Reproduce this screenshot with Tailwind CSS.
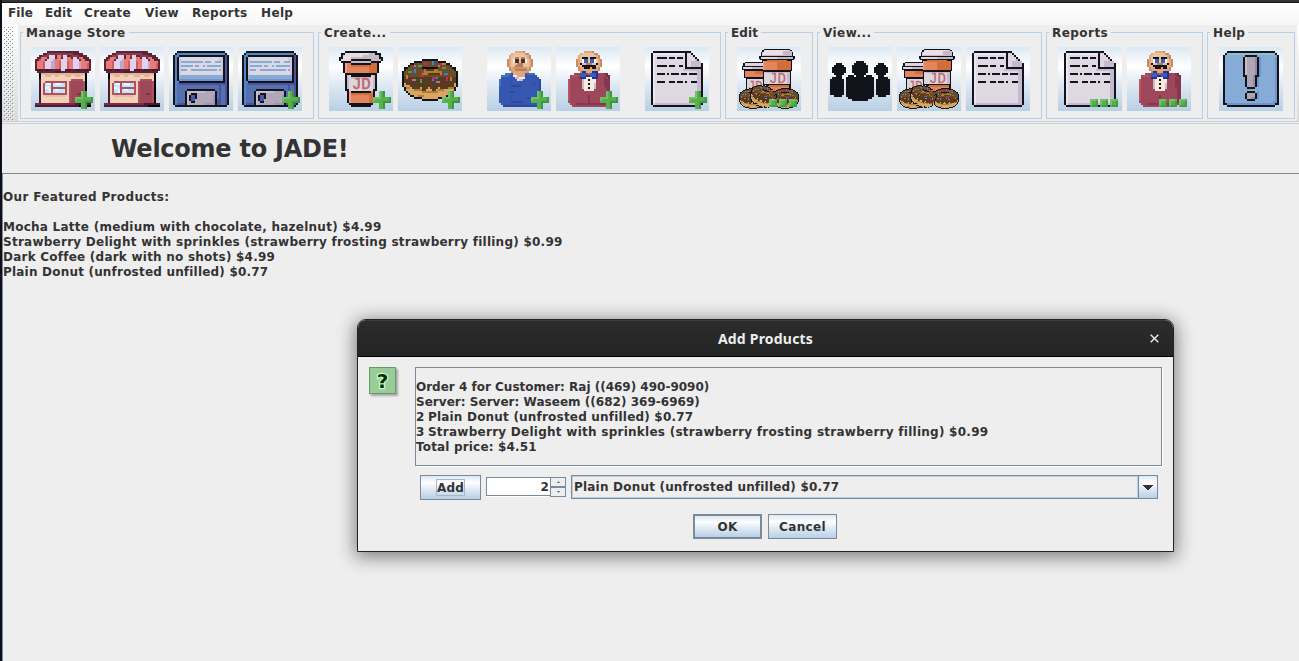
<!DOCTYPE html>
<html lang="en">
<head>
<meta charset="utf-8">
<title>JADE</title>
<script src="https://cdn.jsdelivr.net/npm/@tailwindcss/browser@4"></script>
</head>
<body class="w-[1299px] h-[661px] overflow-hidden bg-[#eeeeee] font-['DejaVu_Sans',sans-serif] font-bold text-[12px] leading-[15px] tracking-[0.2px] text-[#333333]">
<div class="relative flex w-full h-full border-l-2 border-[#0b0f1c]">
 <div class="flex flex-col w-full h-full">
  <div class="h-[3px] shrink-0 bg-[#333333] border-b border-[#161616]"></div>
  <nav class="flex h-[22px] shrink-0 bg-linear-to-b from-white to-[#f7f7f7] pt-[3px] pl-[6px] whitespace-nowrap tracking-[0.35px]">
   <span class="w-[37px] tracking-[0.1px]">File</span><span class="w-[39px] tracking-[0.1px]">Edit</span><span class="w-[61px]">Create</span><span class="w-[47px]">View</span><span class="w-[69px]">Reports</span><span>Help</span>
  </nav>

  <div class="flex h-[96px] shrink-0 bg-linear-to-b from-white to-[#dadada]">
   <svg class="w-[16px] h-[96px] shrink-0" shape-rendering="crispEdges"><defs><pattern id="bumps" width="4" height="4" patternUnits="userSpaceOnUse"><path d="M0 0h1v1H0zM2 2h1v1H2z" fill="#7a8a99"/><path d="M1 1h1v1H1zM3 3h1v1H3z" fill="#fff"/></pattern></defs><rect x="2" y="1" width="10" height="95" fill="url(#bumps)"/></svg>
   <div class="flex flex-1 bg-[#eeeeee] mr-[2px] pt-[7px] pl-[2px] gap-[4px]">
    <section class="relative w-[294px] h-[87px] shrink-0 border border-[#b8cfe5] pt-[14px] pl-[10px] flex gap-[5px]">
     <h2 class="absolute left-[2px] -top-[7px] h-[14px] px-[3px] bg-[#eeeeee] whitespace-nowrap tracking-[0.45px]">Manage Store</h2>
     <svg data-art="store plus"></svg><svg data-art="store"></svg><svg data-art="floppy"></svg><svg data-art="floppy plus"></svg>
    </section>
    <section class="relative w-[403px] h-[87px] shrink-0 border border-[#b8cfe5] pt-[14px] pl-[10px] flex gap-[5px]">
     <h2 class="absolute left-[2px] -top-[7px] h-[14px] px-[3px] bg-[#eeeeee] whitespace-nowrap tracking-[0.45px]">Create...</h2>
     <svg data-art="coffee plus"></svg><svg data-art="donut plus"></svg><span class="w-[15px]"></span><svg data-art="person plus"></svg><svg data-art="waiter plus"></svg><span class="w-[15px]"></span><svg data-art="doc plus"></svg>
    </section>
    <section class="relative w-[88px] h-[87px] shrink-0 border border-[#b8cfe5] pt-[14px] pl-[11px] flex">
     <h2 class="absolute left-[2px] -top-[7px] h-[14px] px-[3px] bg-[#eeeeee] whitespace-nowrap tracking-[0.1px]">Edit</h2>
     <svg data-art="products dots"></svg>
    </section>
    <section class="relative w-[225px] h-[87px] shrink-0 border border-[#b8cfe5] pt-[14px] pl-[10px] flex gap-[5px]">
     <h2 class="absolute left-[2px] -top-[7px] h-[14px] px-[3px] bg-[#eeeeee] whitespace-nowrap tracking-[0.45px]">View...</h2>
     <svg data-art="people"></svg><svg data-art="products"></svg><svg data-art="doc"></svg>
    </section>
    <section class="relative w-[157px] h-[87px] shrink-0 border border-[#b8cfe5] pt-[14px] pl-[11px] flex gap-[5px]">
     <h2 class="absolute left-[2px] -top-[7px] h-[14px] px-[3px] bg-[#eeeeee] whitespace-nowrap tracking-[0.45px]">Reports</h2>
     <svg data-art="doc dots"></svg><svg data-art="waiter dots"></svg>
    </section>
    <section class="relative w-[88px] h-[87px] shrink-0 border border-[#b8cfe5] pt-[14px] pl-[11px] flex">
     <h2 class="absolute left-[2px] -top-[7px] h-[14px] px-[3px] bg-[#eeeeee] whitespace-nowrap tracking-[0.35px]">Help</h2>
     <svg data-art="help"></svg>
    </section>
   </div>
  </div>
  <div class="h-[3px] shrink-0 bg-[#f4f4f4] border-y border-[#cccccc]"></div>

  <h1 class="h-[49px] shrink-0 pl-[109px] pt-[11px] text-[24px] leading-[28px] tracking-[-0.25px]">Welcome to JADE!</h1>
  <main class="flex-1 border-t border-l border-[#7a8a99] pt-[16px] whitespace-nowrap">
   <p class="tracking-[0.35px]">Our Featured Products:</p>
   <p class="mt-[15px] tracking-[0.25px]">Mocha Latte (medium with chocolate, hazelnut) $4.99</p>
   <p class="tracking-[0.25px]">Strawberry Delight with sprinkles (strawberry frosting strawberry filling) $0.99</p>
   <p class="tracking-[0.23px]">Dark Coffee (dark with no shots) $4.99</p>
   <p>Plain Donut (unfrosted unfilled) $0.77</p>
  </main>
 </div>

 <div role="dialog" class="absolute left-[355px] top-[319px] w-[817px] h-[233px] flex flex-col rounded-t-[9px] border border-[#242424] bg-[#eeeeee] shadow-[0_3px_18px_2px_rgba(0,0,0,0.48)]">
  <header class="relative h-[37px] shrink-0 rounded-t-[8px] bg-linear-to-b from-[#2c2c2c] to-[#242424] border-t border-t-[#3a3a3a] border-b border-b-black text-[#eeeeee] text-center text-[14px] leading-[35px] tracking-[0.2px]">
   <span class="font-['Noto_Sans',sans-serif]">Add Products</span>
   <svg class="absolute right-[14px] top-[13px] w-[9px] h-[9px]" viewBox="0 0 9 9" fill="none" stroke="#eeeeee" stroke-width="1.4"><path d="M.7.7l7.6 7.6M8.3.7L.7 8.3"/></svg>
  </header>
  <div class="flex flex-col flex-1 pt-[10px] pl-[11px] whitespace-nowrap">
   <div class="flex">
    <div class="w-[27px] h-[27px] border border-[#669966] bg-[#99cc99] shadow-[2px_2px_2px_rgba(0,0,0,0.3)] flex justify-center">
     <svg class="w-[25px] h-[25px]" viewBox="0 0 25 25"><text x="12.5" y="19.5" text-anchor="middle" font-family="DejaVu Sans" font-weight="700" font-size="20" letter-spacing="0" fill="#003300" stroke="#ccffcc" stroke-width="2.4" paint-order="stroke">?</text></svg>
    </div>
    <div class="ml-[19px] w-[747px] h-[99px] border border-[#7a8a99] shadow-[1px_1px_0_#ffffff] pt-[12px]">
     <p class="tracking-[0px]">Order 4 for Customer: Raj ((469) 490-9090)</p>
     <p class="tracking-[0.03px]">Server: Server: Waseem ((682) 369-6969)</p>
     <p><span class="tracking-[-0.3px]">2 </span>Plain Donut (unfrosted unfilled) $0.77</p>
     <p class="tracking-[0.26px]"><span class="tracking-[-0.3px]">3 </span>Strawberry Delight with sprinkles (strawberry frosting strawberry filling) $0.99</p>
     <p class="tracking-[0.17px]">Total price: $4.51</p>
    </div>
   </div>
   <div class="flex mt-[9px] ml-[51px] h-[25px]">
    <button class="w-[61px] h-[25px] border border-[#7a8a99] bg-[linear-gradient(#dde8f3,#fff_30%,#dde8f3_60%,#b8cfe5)] flex items-center justify-center"><span class="h-[17px] w-[29px] leading-[16px] border border-[#a3b8cc] flex justify-center">Add</span></button>
    <div class="ml-[5px] mt-[2px] w-[80px] h-[20px] flex">
     <div class="w-[64px] h-[19px] border border-r-0 border-[#7a8a99] bg-white shadow-[0_1px_0_#fff] text-right leading-[18px] pr-px">2</div>
     <div class="w-[16px] h-[20px] flex flex-col">
      <div class="h-[10px] border border-[#7a8a99] flex items-center justify-center"><svg class="w-[3px] h-[2px]" shape-rendering="crispEdges"><path d="M1 0h1v1h1v1H0V1h1z" fill="#7a8a99"/></svg></div>
      <div class="h-[10px] border border-[#7a8a99] flex items-center justify-center"><svg class="w-[3px] h-[2px]" shape-rendering="crispEdges"><path d="M0 0h3v1H2v1H1V1H0z" fill="#7a8a99"/></svg></div>
     </div>
    </div>
    <div class="ml-[5px] w-[587px] h-[24px] border border-[#7a8a99] flex">
     <div class="flex-1 border border-[#b8cfe5] pl-px leading-[20px]">Plain Donut (unfrosted unfilled) $0.77</div>
     <div class="w-[19px] border-l border-[#7a8a99] bg-[linear-gradient(#dde8f3,#fff_30%,#dde8f3_60%,#b8cfe5)] flex items-center justify-center"><svg class="w-[10px] h-[5px] mt-px" shape-rendering="crispEdges"><path d="M0 0h10v1H9v1H8v1H7v1H6v1H4V4H3V3H2V2H1V1H0z" fill="#333"/></svg></div>
    </div>
   </div>
   <div class="flex mt-[14px] ml-[324px] gap-[6px]">
    <button class="w-[69px] h-[25px] border-2 border-[#7a8a99] bg-[linear-gradient(#dde8f3,#fff_30%,#dde8f3_60%,#b8cfe5)] leading-[21px] pt-px">OK</button>
    <button class="w-[69px] h-[25px] border border-[#7a8a99] bg-[linear-gradient(#dde8f3,#fff_30%,#dde8f3_60%,#b8cfe5)] leading-[23px] pt-px tracking-[0.35px]">Cancel</button>
   </div>
  </div>
 </div>
</div>

<script>
// Pixel art on a 32-cell grid. Each layer is [colour, "x y w h, x y w h, ..."]; h defaults to 1.
const K = '#12141c';
const HEAD = [
 ['#c98b62', '14 2 5,12 3 9,11 4 11 2,10 6 13 4,11 10 11 2,12 12 9,14 13 5'],
 ['#e2a67c', '14 2 4,12 3 7,11 4 10 2,11 6 11 4,12 10 9 2,13 12 7'],
 ['#eac3a1', '13 3 6,12 4 8 2,12 6 9 4'],
 ['#c98b62', '10 6 1 4,22 6 1 4']
];
const SHEET = {
 store: [
  ['#000', '4 12 24 17,24 28 6 2'], ['#4b1a31', '2 28 28 1,2 29 22 1,4 16 1 13'],
  ['#f2d1b7', '5 13 22 15'], ['#deb49b', '5 13 22,7 14 3,12 14 2,17 14 3,22 14 3'],
  ['#5f2338', '8 2 16 1,6 3 20 1,4 4 24 1,3 5 26 1,2 6 28 6,3 12 26 1'],
  ['#8a3d49', '8 3 13,6 4 3,13 4 3,20 4 4'],
  ['#7a2c40', '2 28 20'],
  ['#e97b77', '5 5 3 1,4 6 3 1,3 7 4 4,13 4 2 2,12 6 3 5,18 5 2 1,18 6 3 5,24 5 2 1,25 6 2 1,25 7 4 4'],
  ['#d05b66', '6 7 1 4,4 6 1,14 7 1 4,18 7 1 4,28 8 1 3'],
  ['#dfd2ee', '9 4 3 2,8 6 3 1,7 7 4 4,16 4 2 2,15 6 3 6,21 5 2 1,21 6 3 1,21 7 4 4'],
  ['#c2a5c8', '10 7 1 4,11 6 1 5,24 7 1 4'],
  ['#4b1a31', '3 11 3,7 11 3,12 12 3,17 11 3,22 11 3,26 11 3'],
  ['#b05060', '7 17 11,6 18 12 6,20 16 6,19 17 8 11'],
  ['#bfe6fa', '7 18 3 5,11 18 6 2,11 21 6 2'], ['#e7f8ff', '8 18 2 1,7 20 2 1,12 18 3 1,12 21 2 1,9 21 1 2'],
  ['#e6bda4', '7 24 10 1'], ['#9f475a', '19 17 7 11'], ['#b05060', '19 17 1 11,20 16 5'], ['#7f3347', '23 23 2']
 ],
 floppy: [
  [K, '4 2 24,3 3 26,2 4 28 25,3 29 26'],
  ['#5685c4', '4 3 24,3 4 2 25'], ['#566faf', '4 18 24 11'], ['#4c529c', '28 4 1 25,5 18 23,25 19 1 10,24 26 1 3,4 28 4'],
  [K, '5 4 22,4 5 24 12,5 17 22'],
  ['#ddd8e1', '5 5 22 9'], ['#d4c5d8', '5 5 1 9,25 5 2 2,26 5 1 9'], ['#86abd6', '5 14 22 3'], ['#8cbccb', '5 14 1 3'], ['#7393cd', '5 16 22'],
  ['#86abd6', '6 7 11,18 7 3,23 7 3,6 9 6,13 9 2,17 9 1,19 9 7,6 11 3,11 11 13,25 11 1'],
  [K, '9 21 14,8 22 16 7'], ['#b0a8ba', '9 22 14 7'], ['#c7bdca', '9 22 1 7,10 22 8'], ['#a294ac', '22 24 1 5,18 28 4'],
  [K, '11 23 3 5,10 24 4 3'], ['#465bab', '11 24 2 3'], ['#b0a8ba', '13 26 1 2'], [K, '11 27 2']
 ],
 coffee: [
  [K, '8 2 16,6 3 20 2,5 5 22 2,6 7 20,7 8 18 5,8 13 16 9,9 22 14 6,10 28 12,11 29 10'],
  ['#e6dde2', '8 3 15,7 4 18,7 5 18,6 6 20,11 7 10'], ['#c6bac5', '20 3 3,17 4 8,11 5 14,21 6 5,11 7 10'],
  [K, '11 6 10'],
  ['#e58560', '8 8 16 5'], ['#d06f3a', '20 8 4 5'], ['#f0a18e', '8 8 1 5'],
  [K, '11 8 10'], ['#d06f3a', '11 9 10'], ['#e58560', '9 10 11 3'],
  ['#ded6de', '9 14 14 7'], ['#c6bac5', '22 14 1 7,9 14 1 7,11 15 10'], [K, '11 14 10'],
  ['#e58560', '10 22 12 6'], ['#d06f3a', '11 22 10,20 23 2 5'], ['#f0a18e', '10 22 1 6'], [K, '11 22 10'], ['#ded6de', '10 21 12'], ['#d06f3a', '11 23 10']
 ],
 donut: [
  [K, '12 6 8,8 7 16,6 8 20,5 9 22,3 10 26,3 11 26,2 12 28 8,3 20 26 2,4 22 24,5 23 22,6 24 20,8 25 16,12 26 8'],
  ['#d6a663', '3 18 26 2,4 20 24 2,5 22 22,6 23 20,8 24 16,12 25 8'],
  ['#b27c32', '4 20 2,3 17 2,8 21 4,12 22 8,20 21 3,23 20 5,10 24 3'],
  ['#6d4a2a', '12 7 8,8 8 16,6 9 20,5 10 22,4 11 24,3 12 26 4'], ['#563b22', '3 15 26 3,4 18 24,6 19 22,7 20 4,12 20 3,16 20 4,21 20 4,12 21 2,17 21 2'],
  ['#b67b27', '13 11 7,12 12 10,12 13 10'], [K, '12 10 8'], ['#563b22', '14 11 4,15 13 6'],
  ['#c42a4f', '13 8 2,11 14 2,17 15 2,24 15 1 2,12 12 1,21 8 1'], ['#3184dc', '17 7 1 2,8 11 1 2,23 13 2,17 16 1,19 15 1'],
  ['#3ba55a', '10 9 2,5 12 2,11 16 1 2,22 10 2'], ['#c366a8', '7 16 2,20 9 1,19 17 2,8 9 1'], ['#d2732e', '4 14 1 2,26 15 1 2,22 8 2']
 ],
 person: [
  ...HEAD, ['#f4e8e4', '13 6 1 2,19 6 1 2'], ['#4b302e', '14 6 2 2,17 6 2 2'], ['#bc7c58', '14 5 2,17 5 2,15 8 3 1,14 9 4,14 11 6'], ['#cf946d', '13 10 7'],
  ['#3657b0', '10 13 14,8 14 17,7 15 19,6 16 21 12,7 28 20,8 29 18'],
  ['#e2a67c', '13 13 6,14 14 5'], ['#f0e9ef', '13 14 2,14 15 5,15 16 3'], ['#e2a67c', '14 13 5,16 14 3'], ['#c4bccf', '14 15 2,16 16 2'],
  ['#3b76bd', '9 13 3,7 14 4,20 13 4,6 16 1 4'], ['#2f479c', '26 16 1 12,23 18 1,12 19 5,8 29 17,12 27 6,11 22 3,20 25 3']
 ],
 waiter: [
  ...HEAD, [K, '13 5 3,17 5 3,12 8 1,20 8 1,13 9 7,14 10 3,18 10 2'], ['#fff', '13 6 1 2,19 6 1 2'], ['#3b5fb8', '14 6 2 2,17 6 2 2'], ['#bc7c58', '15 8 3'],
  ['#733043', '23 13 3,25 14 2 3'], ['#9f475a', '9 13 16,7 14 18,7 15 19,6 16 20 12,7 28 19,8 29 17'],
  ['#b85362', '6 16 1 11,8 14 3'], ['#863650', '24 15 1 5,25 16 2 12,16 24 1 5,10 28 15,24 13 1'],
  ['#f6eadf', '13 15 7 6,14 21 5'], ['#d1b8ce', '13 16 1 5,19 18 1 3'], [K, '16 16 1,16 18 1,16 20 1'],
  ['#2b2f91', '13 12 2,12 13 3 3,15 14 3,18 12 3 4,17 13 2'], ['#355fb9', '12 13 3 2,17 13 3 2'], ['#9f753e', '16 13 1']
 ],
 doc: [
  [K, '4 2 19,3 3 21 26,23 4 2 25,24 5 2 24,26 6 1 23,27 7 1 22,28 8 1 21,4 29 24'],
  ['#ddd8e1', '4 3 16 26,20 11 8 18'], ['#c6bad0', '26 11 2 18,19 11 9,5 28 23'], ['#ebe7ee', '4 3 16 1,4 3 1 25'],
  ['#ddd8e1', '21 3 2 7,23 4 1 6,24 5 1 5'], ['#c6bad0', '23 7 5 3,25 6 1 4'],
  [K, '6 5 5,12 5 3,16 5 3,6 9 5,12 9 3,17 9 2,6 13 4,11 13 1,13 13 4,18 13 3,22 13 4,6 17 4,12 17 3,16 17 3,20 17 1,23 17 3']
 ],
 people: [[K, '14 7 4,13 8 6,12 9 8 4,13 13 6,14 14 4,9 15 14 10,10 14 3,19 14 3,10 25 12,12 26 8,4 8 3,3 9 5,2 10 7 3,3 13 5,4 14 3,1 16 7 8,2 15 5,3 24 4,25 8 3,24 9 5,23 10 7 3,24 13 5,25 14 3,24 16 7 8,25 15 5,25 24 4']],
 help: [
  [K, '4 2 24,3 3 26,2 4 28 25,4 29 24'], ['#86abd6', '4 3 24,3 4 26 24,4 28 24'], ['#8fc0ca', '4 3 24'], ['#6f92d1', '28 5 1 23,27 27 1,4 28 24'],
  ['#6f92d1', '20 5 1 10,19 15 1 5,19 22 1 4'],
  [K, '13 4 6,12 5 8 10,13 15 6 5,14 20 4,14 22 4,13 23 6 3,14 26 4'],
  ['#afa5b5', '13 5 6 9,14 14 4 6,14 23 4 3'], ['#c7bdca', '13 5 1 9'], ['#9689a4', '18 5 1 9,17 14 1 6,16 25 2']
 ],
 plus: [['#57b149', '25 22 3 9,22 25 9 3'], ['#72c16a', '25 22 1 3,22 25 4 1,22 25 1 2'], ['#3e9447', '27 22 1 3,27 27 4 1,27 28 1 3,30 25 1 3']],
 dots: [['#57b149', '16 26 4 4,21 26 4 4,26 26 4 4'], ['#72c16a', '16 26 3 1,21 26 3 1,26 26 3 1,16 26 1 3,21 26 1 3,26 26 1 3'], ['#419c45', '19 27 1 3,24 27 1 3,29 27 1 3,17 29 3,22 29 3,27 29 3']],
 cups: [
  [K, '27 2 26,25 3 30 2,24 5 32 4,22 9 36 3,23 12 34,25 13 30 11,26 24 28 14,29 37 25 8'],
  ['#ded6de', '27 3 26 2,25 5 30 4,24 10 32 2'], ['#e9e0e5', '27 3 22 2,26 5 20 3'], ['#c6bac5', '46 4 9 5,40 10 16 2,26 8 29'],
  ['#e58560', '26 14 28 9,30 39 22 6'], ['#d06f3a', '40 14 14 9,30 13 20 2,32 38 20 2'], ['#f0a18e', '26 14 1 9'], ['#ded6de', '27 25 26 12'], ['#c6bac5', '50 25 3 12,28 25 25'],
  [K, '8 15 18,6 16 20 3,5 19 21 4,7 23 19 8,9 31 17 15'],
  ['#ded6de', '8 16 18 3,6 20 20 2'], ['#c6bac5', '15 20 11 2'], ['#e58560', '8 24 18 6'], ['#d06f3a', '18 24 8 3'], ['#ded6de', '10 32 16 12']
 ]
};

const draw = layers => layers.map(([fill, spans]) =>
 `<path fill="${fill}" d="${spans.split(',').map(s => { const [x, y, w, h = 1] = s.trim().split(' '); return `M${x} ${y}h${w}v${h}h-${w}z`; }).join('')}"/>`).join('');
const mark = (x, y, size) => `<text x="${x}" y="${y}" font-family="Liberation Mono" font-weight="400" font-size="${size}" letter-spacing="0" fill="#bd686c" stroke="#bd686c" stroke-width=".3">JD</text>`;
const big = name => `<g transform="scale(2)">${draw(SHEET[name])}${name === 'coffee' ? mark(11.5, 20.8, 7.8) : ''}</g>`;
const products = draw(SHEET.cups) + mark(32, 36, 14) + mark(11, 43, 12)
 + `<g transform="translate(0 35)">${draw(SHEET.donut)}</g><g transform="translate(33 35) scale(.95 1)">${draw(SHEET.donut)}</g><g transform="translate(18 28) rotate(20) scale(.94 1.05)">${draw(SHEET.donut)}</g>`;

document.querySelectorAll('svg[data-art]').forEach(svg => {
 svg.setAttribute('class', 'w-[64px] h-[64px] shrink-0 bg-[linear-gradient(#dde8f3,#fff_30%,#dde8f3_60%,#b8cfe5)]');
 svg.setAttribute('viewBox', '0 0 64 64');
 svg.setAttribute('shape-rendering', 'crispEdges');
 svg.innerHTML = svg.dataset.art.split(' ').map(n => n === 'products' ? products : big(n)).join('');
});
</script>
</body>
</html>
